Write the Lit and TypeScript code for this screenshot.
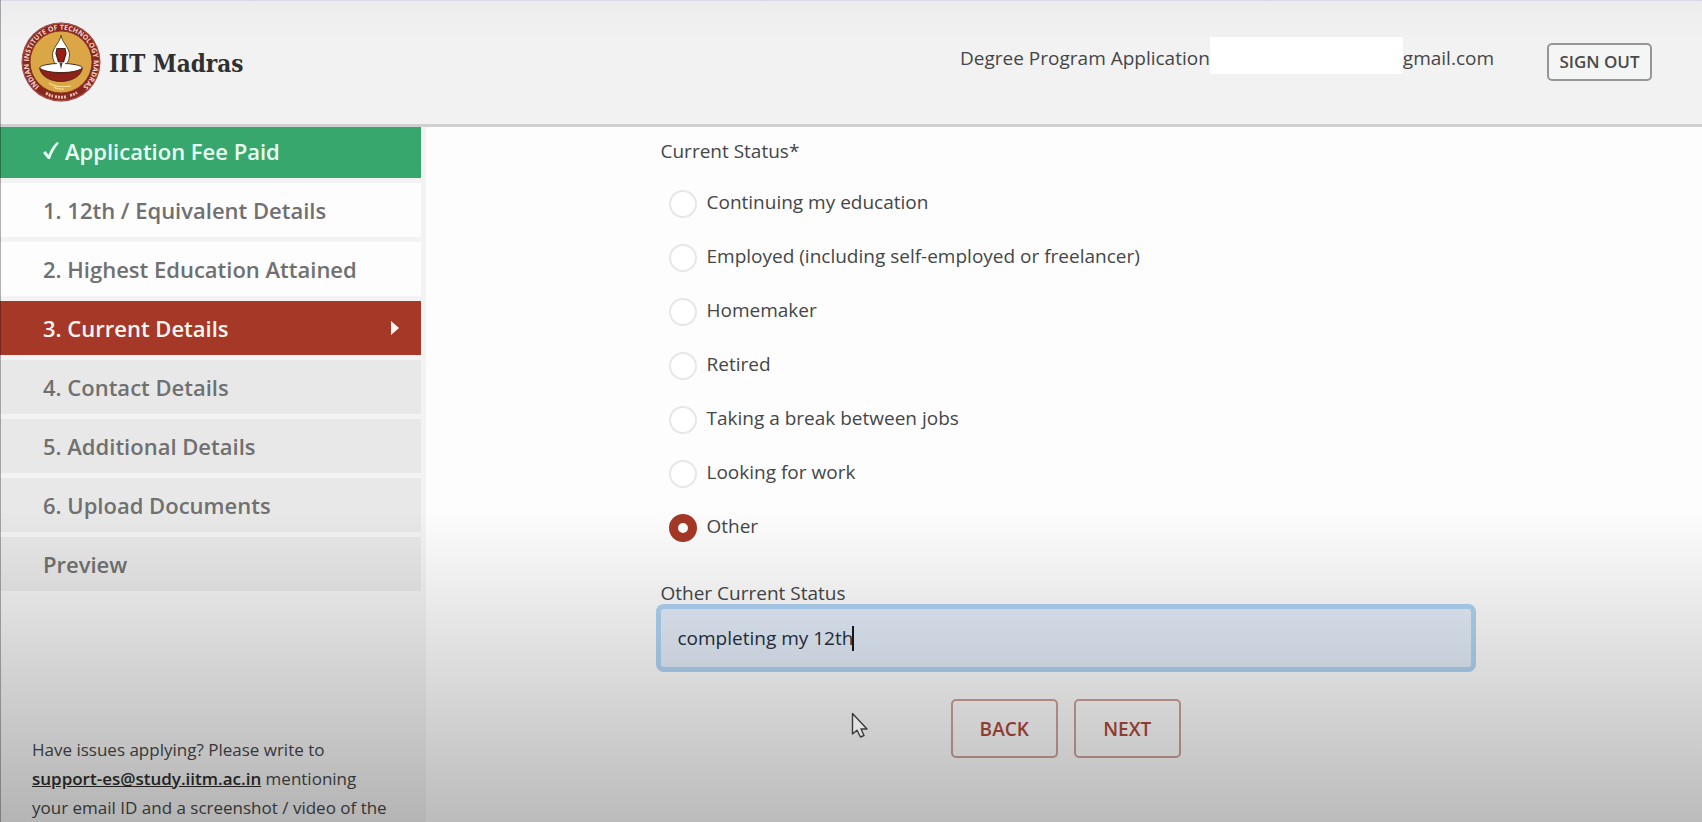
import { LitElement, html, css } from "lit";
import { customElement, property, state } from "lit/decorators.js";
import { classMap } from "lit/directives/class-map.js";

@customElement("iitm-seal")
class IitmSeal extends LitElement {
  static styles = css`
    :host {
      display: block;
      width: 80px;
      height: 80px;
    }
    .seal {
      display: block;
      width: 100%;
      height: 100%;
    }
    .ring-text {
      font: 700 7px "Open Sans", sans-serif;
      fill: #f0d9cf;
    }
  `;

  render() {
    return html`
      <svg class="seal" viewBox="0 0 80 80" role="img" aria-label="IIT Madras seal">
        <defs>
          <path id="arc" d="M18.500 64.500 A32.500 32.500 0 1 1 63 63.500" />
        </defs>
        <circle cx="40" cy="40" r="39.500" fill="#8a2620" />
        <circle cx="40" cy="40" r="38.700" fill="none" stroke="#c98a7c" stroke-width=".5" />
        <circle cx="40" cy="40" r="31" fill="#dba646" stroke="#7b2a1c" stroke-width=".8" />
        <text class="ring-text">
          <textPath href="#arc">INDIAN INSTITUTE OF TECHNOLOGY MADRAS</textPath>
        </text>
        <path d="M25 71 q3.500 2.500 7 3.200 m2 .3 q6 1.500 12 0 m3-1 q4-1 7-3" fill="none"
          stroke="#e6bfae" stroke-width="3" stroke-dasharray="2 1" />
        <path d="M40 13 C41 21 48.500 25 48.500 33 C48.500 39 45 43 43 47 H37 C35 43 31.500 39 31.500 33 C31.500 25 39 21 40 13Z"
          fill="#fff" stroke="#5b4526" stroke-width="1" />
        <path d="M36 26.500 h8 l1 5 -2.500 8.500 h-5 L35 31.500Z" fill="#9b1c17" stroke="#46201a" stroke-width="1.200" />
        <ellipse cx="40" cy="46" rx="21.300" ry="4.600" fill="#fff" stroke="#4d3020" stroke-width="1" />
        <path d="M36 40 L35 49 H45 L44 40 L41.500 41 H38.500Z" fill="#fff" />
        <path d="M38.500 41 h3 l-1.500 6z" fill="#3f3f3f" />
        <path d="M18.700 46.500 Q28 51 40 51 Q52 51 61.300 46.500 C60 54 51 59.500 40 59.500 C29 59.500 20 54 18.700 46.500Z"
          fill="#8c2218" stroke="#4a2015" stroke-width=".8" />
        <path d="M28 61 q5 3.500 12 3.500 t10-.5 M33 65.500 q5 2 10 1.500" fill="none" stroke="#f7df9a" stroke-width="1.200" />
      </svg>
    `;
  }
}

interface Step {
  label: string;
  status: "paid" | "done" | "current" | "locked";
}

@customElement("step-list")
class StepList extends LitElement {
  @property({ attribute: false }) steps: Step[] = [];

  static styles = css`
    :host {
      display: block;
    }
    .steps {
      display: flex;
      flex-direction: column;
      gap: 5px;
    }
    .step {
      display: flex;
      align-items: center;
      justify-content: space-between;
      height: 54px;
      box-sizing: border-box;
      padding: 0 22px 0 43px;
      font-size: 22px;
      font-weight: 600;
      color: #707070;
      background: #e8e8e8;
      text-decoration: none;
    }
    .done {
      background: #fdfdfd;
    }
    .paid {
      height: 51px;
      padding-bottom: 4px;
      color: #eafff3;
      background: #37a76e;
    }
    .current {
      color: #fff6f3;
      background: #a53827;
    }
    .name {
      display: flex;
      align-items: center;
      gap: 6px;
    }
    .tick {
      width: 16px;
      height: 18px;
    }
    .arrow {
      width: 8px;
      height: 14px;
    }
  `;

  render() {
    return html`
      <nav class="steps" aria-label="Application steps">
        ${this.steps.map(
          (s) => html`
            <a href="#" class=${classMap({ step: true, [s.status]: true })}>
              <span class="name">
                ${s.status === "paid"
                  ? html`<svg class="tick" viewBox="0 0 16 18" aria-hidden="true">
                      <path d="M0 11 L2.500 9 L5.500 13 Q8.500 5 14 0 L16 1 Q10 8 7 17 H5Z" fill="#eafff3" />
                    </svg>`
                  : null}
                ${s.label}
              </span>
              ${s.status === "current"
                ? html`<svg class="arrow" viewBox="0 0 8 14" aria-hidden="true">
                    <path d="M0 0 L8 7 L0 14Z" fill="#fff6f3" />
                  </svg>`
                : null}
            </a>
          `
        )}
      </nav>
    `;
  }
}

@customElement("app-root")
class AppRoot extends LitElement {
  @state() private selected = "Other";
  @state() private other = "completing my 12th";

  private steps: Step[] = [
    { label: "Application Fee Paid", status: "paid" },
    { label: "1. 12th / Equivalent Details", status: "done" },
    { label: "2. Highest Education Attained", status: "done" },
    { label: "3. Current Details", status: "current" },
    { label: "4. Contact Details", status: "locked" },
    { label: "5. Additional Details", status: "locked" },
    { label: "6. Upload Documents", status: "locked" },
    { label: "Preview", status: "locked" },
  ];

  private options = [
    "Continuing my education",
    "Employed (including self-employed or freelancer)",
    "Homemaker",
    "Retired",
    "Taking a break between jobs",
    "Looking for work",
    "Other",
  ];

  static styles = css`
    :host {
      display: block;
      font-family: "Open Sans", "Noto Sans", sans-serif;
      font-size: 19px;
      color: #444648;
    }
    .page {
      position: relative;
      display: flex;
      flex-direction: column;
      height: 100vh;
      overflow: hidden;
      background: #fdfdfd;
    }
    .shade {
      position: absolute;
      inset: 62% 0 0 0;
      background: linear-gradient(rgba(0, 0, 0, 0), rgba(0, 0, 0, 0.26));
      pointer-events: none;
    }
    .edge {
      position: absolute;
      inset: 0 auto 0 0;
      width: 1px;
      background: rgba(0, 0, 0, 0.3);
      pointer-events: none;
    }
    .top {
      display: flex;
      align-items: center;
      justify-content: space-between;
      flex: none;
      height: 127px;
      box-sizing: border-box;
      padding: 0 50px 2px 21px;
      border-top: 1px solid #d9d8e6;
      border-bottom: 3px solid #d0d0d0;
      background: linear-gradient(#ececee, #f2f2f2 40px);
    }
    .brand {
      display: flex;
      align-items: center;
      gap: 8px;
    }
    .brand-name {
      margin: 0;
      padding-top: 4px;
      font: 700 24px "Roboto Slab", "DejaVu Serif Condensed", "DejaVu Serif", serif;
      color: #303030;
    }
    .session {
      display: flex;
      align-items: center;
      gap: 53px;
    }
    .account {
      display: flex;
      align-items: flex-end;
      margin-bottom: 12px;
      line-height: 32px;
      white-space: nowrap;
    }
    .redacted {
      width: 193px;
      height: 37px;
      background: #fff;
    }
    .sign-out {
      width: 105px;
      height: 38px;
      padding: 0;
      border: 2px solid #969696;
      border-radius: 5px;
      background: #f4f6f5;
      color: #4a4a4a;
      font: 600 17px "Open Sans", sans-serif;
    }
    .body {
      display: flex;
      flex: 1;
      min-height: 0;
    }
    .side {
      display: flex;
      flex-direction: column;
      width: 25%;
      box-sizing: border-box;
      padding-right: 5px;
      background: #f3f3f3;
      flex: none;
    }
    .help {
      margin: 144px 0 0;
      padding: 0 24px 0 32px;
      font-size: 17px;
      line-height: 29px;
    }
    .mail {
      font-weight: 600;
      color: #2c2c2c;
    }
    .main {
      flex: 1;
      padding: 9px 231px 0 235px;
    }
    .choices {
      margin: 0;
      padding: 0;
      border: 0;
    }
    .caption {
      display: block;
      padding: 0;
      line-height: 30px;
    }
    .choice-list {
      display: flex;
      flex-direction: column;
      padding: 11px 0 0 8px;
    }
    .choice {
      display: flex;
      align-items: center;
      gap: 10px;
      height: 54px;
      line-height: 30px;
    }
    .choice-label {
      padding-bottom: 4px;
    }
    .radio {
      appearance: none;
      flex: none;
      width: 28px;
      height: 28px;
      margin: 0;
      border: 2px solid #e7e7e7;
      border-radius: 50%;
      background: #fff;
    }
    .radio:checked {
      border: 9px solid #a53827;
    }
    .other {
      padding-top: 23px;
    }
    .field {
      position: relative;
      display: flex;
      margin: 1px 0 0;
    }
    .entry {
      width: 100%;
      height: 58px;
      box-sizing: border-box;
      padding: 0 17px;
      border: 0;
      outline: 0;
      border-radius: 3px;
      box-shadow: 0 0 0 5px #b0d4f4;
      background: #e4edf9;
      color: #263040;
      font: 400 19px "Open Sans", sans-serif;
    }
    .caret {
      position: absolute;
      left: 191px;
      top: 17px;
      width: 2px;
      height: 25px;
      background: #151a22;
    }
    .actions {
      display: flex;
      justify-content: center;
      gap: 16px;
      padding-top: 32px;
    }
    .action {
      width: 107px;
      height: 59px;
      padding: 0;
      border: 2px solid #cda29a;
      border-radius: 5px;
      background: transparent;
      color: #ac4a3b;
      font: 600 19px "Open Sans", sans-serif;
    }
    .pointer {
      position: absolute;
      left: 851px;
      top: 712px;
      width: 18px;
      height: 27px;
      pointer-events: none;
    }
  `;

  render() {
    return html`
      <div class="page">
        <header class="top">
          <div class="brand">
            <iitm-seal></iitm-seal>
            <h1 class="brand-name">IIT Madras</h1>
          </div>
          <div class="session">
            <div class="account">
              <span>Degree Program Application</span>
              <span class="redacted"></span>
              <span>gmail.com</span>
            </div>
            <button class="sign-out" type="button">SIGN OUT</button>
          </div>
        </header>
        <div class="body">
          <aside class="side">
            <step-list .steps=${this.steps}></step-list>
            <p class="help">
              Have issues applying? Please write to
              <a class="mail" href="mailto:support-es@study.iitm.ac.in">support-es@study.iitm.ac.in</a>
              mentioning your email ID and a screenshot / video of the
            </p>
          </aside>
          <main class="main">
            <fieldset class="choices">
              <legend class="caption">Current Status*</legend>
              <div class="choice-list">
                ${this.options.map(
                  (o) => html`
                    <label class="choice">
                      <input
                        class="radio"
                        type="radio"
                        name="status"
                        .checked=${this.selected === o}
                        @change=${() => (this.selected = o)}
                      />
                      <span class="choice-label">${o}</span>
                    </label>
                  `
                )}
              </div>
            </fieldset>
            <div class="other">
              <label class="caption" for="other-status">Other Current Status</label>
              <div class="field">
                <input
                  class="entry"
                  id="other-status"
                  type="text"
                  .value=${this.other}
                  @input=${(e: Event) => (this.other = (e.target as HTMLInputElement).value)}
                />
                <span class="caret"></span>
              </div>
            </div>
            <div class="actions">
              <button class="action" type="button">BACK</button>
              <button class="action" type="button">NEXT</button>
            </div>
          </main>
        </div>
        <div class="shade"></div>
        <div class="edge"></div>
        <svg class="pointer" viewBox="0 0 18 27" aria-hidden="true">
          <path d="M1.500 1.500 V22 L6 18.200 L9.500 25 L13 23.500 L10 17 H16Z" fill="#e2e2e2"
            stroke="#3c3c3c" stroke-width="1.400" stroke-linejoin="round" />
        </svg>
      </div>
    `;
  }
}
